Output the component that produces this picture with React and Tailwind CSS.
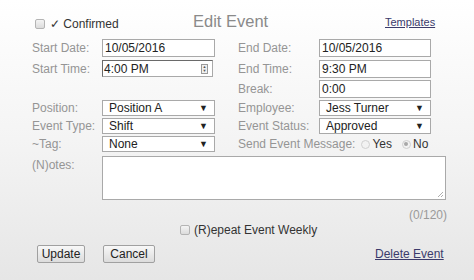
const labelCls = 'text-[#959595] leading-[14px]'
const inputCls = 'h-[18px] border border-[#a9a9a9] bg-white px-[2px] flex items-center text-[#222] leading-none'

function Check() {
  return <span className="inline-block w-[10px] h-[10px] rounded-[2px] border border-[#b4b4b4] bg-gradient-to-b from-[#f4f4f4] to-[#dcdcdc]" />
}

function Radio({ checked }) {
  return (
    <span className="inline-flex w-[9px] h-[9px] rounded-full border border-[#d0d0d0] bg-[#f2f2f2] items-center justify-center">
      {checked && <span className="w-[4px] h-[4px] rounded-full bg-[#a8a8a8]" />}
    </span>
  )
}

function Select({ value, w = 'w-[113px]' }) {
  return (
    <div className={`${w} h-[16px] border border-[#a9a9a9] bg-white flex items-center justify-between pl-[6px] pr-[6px] text-[#222] leading-none`}>
      <span>{value}</span>
      <span className="text-[9px] text-[#222]">▼</span>
    </div>
  )
}

function Row({ label, field, label2, field2, h = 'h-[18px]' }) {
  return (
    <div className={`flex items-center ${h}`}>
      <div className={`w-[70px] ${labelCls}`}>{label}</div>
      <div className="w-[113px]">{field}</div>
      <div className="w-[23px]" />
      <div className={`w-[81px] ${labelCls}`}>{label2}</div>
      <div className="w-[112px]">{field2}</div>
    </div>
  )
}

export default function App() {
  return (
    <div className="w-[474px] h-[280px] overflow-hidden bg-gradient-to-b from-white via-[#f4f4f4] to-[#e6e6e6] font-['Liberation_Sans',Arial,sans-serif] text-[12px] pl-[32px] pt-[12px]">
      <div className="flex h-[22px]">
        <div className="w-[161px] self-end flex items-center gap-[5px] pl-[3px] pb-[3px] text-[#333] leading-[14px]">
          <Check />
          <span>✓ Confirmed</span>
        </div>
        <div className="w-[192px] self-start text-[16.5px] leading-[19px] text-[#8a8a8a]">Edit Event</div>
        <a className="self-end text-[11px] leading-[14px] text-[#3b3b6b] underline pb-[5px]">Templates</a>
      </div>

      <div className="mt-[5px] flex flex-col gap-[3px]">
        <Row
          label="Start Date:"
          field={<div className={`${inputCls} w-[113px]`}>10/05/2016</div>}
          label2="End Date:"
          field2={<div className={`${inputCls} w-[112px]`}>10/05/2016</div>}
        />
        <Row
          label="Start Time:"
          h="h-[17px]"
          field={
            <div className="w-[111px] h-[17px] border border-[#a9a9a9] border-t-[#6a6a6a] border-l-[#6a6a6a] bg-white flex items-center justify-between pl-[1px] pr-[4px] text-[#222] leading-none">
              <span>4:00 PM</span>
              <span className="w-[7px] h-[10px] border border-[#9a9a9a] bg-[#f0f0f0] flex flex-col items-center justify-center text-[4px] leading-[4px] text-[#555]">
                <span>▲</span>
                <span>▼</span>
              </span>
            </div>
          }
          label2="End Time:"
          field2={<div className={`${inputCls} w-[112px] h-[17px]`}>9:30 PM</div>}
        />
        <Row
          label=""
          h="h-[17px]"
          field={null}
          label2="Break:"
          field2={<div className={`${inputCls} w-[112px] h-[17px]`}>0:00</div>}
        />
      </div>

      <div className="mt-[3px] flex flex-col gap-[2px]">
        <Row h="h-[16px]" label="Position:" field={<Select value="Position A" />} label2="Employee:" field2={<Select value="Jess Turner" w="w-[112px]" />} />
        <Row h="h-[16px]" label="Event Type:" field={<Select value="Shift" />} label2="Event Status:" field2={<Select value="Approved" w="w-[112px]" />} />
        <div className="flex items-center h-[16px]">
          <div className={`w-[70px] ${labelCls}`}>~Tag:</div>
          <div className="w-[113px]"><Select value="None" /></div>
          <div className="w-[23px]" />
          <div className={`${labelCls} flex items-center`}>
            <span>Send Event Message:</span>
            <span className="ml-[6px] flex items-center gap-[2px] text-[#333]"><Radio /> Yes</span>
            <span className="ml-[10px] flex items-center gap-[2px] text-[#333]"><Radio checked /> No</span>
          </div>
        </div>
      </div>

      <div className="mt-[4px] flex">
        <div className={`w-[70px] pt-[2px] ${labelCls}`}>(N)otes:</div>
        <div className="relative w-[344px] h-[44px] border border-[#a9a9a9] bg-white">
          <svg className="absolute right-[1px] bottom-[1px]" width="7" height="7" viewBox="0 0 7 7">
            <path d="M6 1 L1 6 M6 4 L4 6" stroke="#999" strokeWidth="0.8" />
          </svg>
        </div>
      </div>

      <div className="w-[415px] text-right text-[#9a9a9a] mt-[8px] leading-[14px]">(0/120)</div>

      <div className="mt-[1px] ml-[148px] flex items-center gap-[4px] text-[#333] leading-[14px]">
        <Check />
        <span>(R)epeat Event Weekly</span>
      </div>

      <div className="mt-[8px] flex items-center">
        <button className="ml-[5px] w-[48px] h-[18px] border border-[#a0a0a0] rounded-[2px] bg-gradient-to-b from-[#f8f8f8] to-[#dcdcdc] text-[#222] leading-none">Update</button>
        <button className="ml-[18px] w-[52px] h-[18px] border border-[#a0a0a0] rounded-[2px] bg-gradient-to-b from-[#f8f8f8] to-[#dcdcdc] text-[#222] leading-none">Cancel</button>
        <a className="ml-[220px] text-[#3b3b6b] underline leading-[14px]">Delete Event</a>
      </div>
    </div>
  )
}
